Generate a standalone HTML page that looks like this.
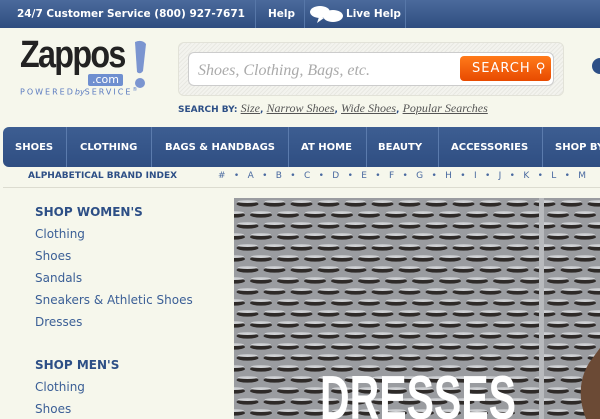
<!DOCTYPE html>
<html><head><meta charset="utf-8"><style>
*{margin:0;padding:0;box-sizing:border-box}
body{width:600px;height:419px;overflow:hidden;background:#f6f7ec;font-family:"DejaVu Sans","Liberation Sans",sans-serif;position:relative}
.top{position:absolute;left:0;top:0;width:600px;height:28px;background:linear-gradient(#4b6a9c,#2f4d80);color:#fff;font-weight:bold;font-size:10.5px}
.top span{position:absolute;top:8px}
.sep{position:absolute;top:0;width:1px;height:28px;background:#1f3866;border-right:1px solid #5777a8}
.logo{position:absolute;left:20px;top:36px}
.sbox{position:absolute;left:178px;top:42px;width:386px;height:54px;border:1px solid #e2e2d8;border-radius:6px;background:repeating-linear-gradient(135deg,#f3f3ee 0 2px,#e8e8e2 2px 3px)}
.sin{position:absolute;left:188px;top:52px;width:366px;height:34px;background:#fff;border:1px solid #ccc;border-radius:6px;font-family:"Liberation Serif",serif;font-style:italic;color:#aaa;font-size:16px;padding:9px 0 0 9px}
.sbtn{position:absolute;left:460px;top:56px;width:91px;height:25px;border-radius:4px;background:linear-gradient(#ff7a1a,#e84a00);color:#fff;font-size:13px;letter-spacing:1px;padding:5px 0 0 12px}
.sby{position:absolute;left:178px;top:101px;font-size:9px;color:#2d4f86;font-weight:bold;white-space:nowrap}
.sby i{font-family:"Liberation Serif",serif;font-weight:normal;color:#555;text-decoration:underline;font-size:12px}
.nav{position:absolute;left:3px;top:127px;width:600px;height:40px;background:linear-gradient(#3d5e92,#2f4e82);border-radius:6px 0 0 6px;color:#fff;font-weight:bold;font-size:10px;white-space:nowrap}
.nav span{position:absolute;top:15px}
.nav b{position:absolute;top:0;width:1px;height:40px;background:#5b7bad}
.idx{position:absolute;top:171px;font-size:9px;color:#2d4f86;white-space:nowrap}
.line{position:absolute;left:3px;top:187px;width:597px;height:1px;background:#dcdcd0}
.side{position:absolute;left:35px;color:#3b5f96;font-size:12px}
.h{font-weight:bold;font-size:12px;color:#2d4f86}
.img{position:absolute;left:234px;top:198px;width:366px;height:221px;overflow:hidden;background:#8d8f93}
</style></head><body>
<div class="top">
<span style="left:17px">24/7 Customer Service (800) 927-7671</span>
<div class="sep" style="left:255px"></div>
<span style="left:268px">Help</span>
<div class="sep" style="left:304px"></div>
<svg style="position:absolute;left:309px;top:5px" width="36" height="20"><ellipse cx="11" cy="7" rx="10" ry="6" fill="#fff"/><ellipse cx="24" cy="11" rx="10" ry="6" fill="#fff"/><path d="M10 12 L8 18 L15 13Z" fill="#fff"/></svg>
<span style="left:346px">Live Help</span>
<div class="sep" style="left:405px"></div>
</div>
<div class="logo">
<div style="font-family:'Liberation Sans',sans-serif;font-weight:bold;font-size:38px;color:#222;letter-spacing:-2px;line-height:38px;transform:scaleX(0.85);transform-origin:left">Zappos</div>
<div style="position:absolute;left:68px;top:38px;background:#6f8fd0;color:#fff;font-size:11px;padding:0 4px;border-radius:2px;line-height:12px">.com</div>
<svg style="position:absolute;left:110px;top:4px" width="20" height="50"><path d="M5 2 Q12 -1 16 4 L13 31 Q10 35 7 32 Z" fill="#7b95d0"/><circle cx="10" cy="43" r="5" fill="#7b95d0"/></svg>
<div style="position:absolute;left:0;top:51px;font-size:8px;color:#5b7bc0;letter-spacing:2px;white-space:nowrap">POWERED<i style="letter-spacing:0">by</i>SERVICE<sup style="font-size:5px">®</sup></div>
</div>
<div class="sbox"></div>
<div class="sin">Shoes, Clothing, Bags, etc.</div>
<div class="sbtn">SEARCH ⚲</div>
<div style="position:absolute;left:592px;top:58px;width:16px;height:16px;border-radius:8px;background:#2d4f86"></div>
<div class="sby">SEARCH BY: <i>Size</i>, <i>Narrow Shoes</i>, <i>Wide Shoes</i>, <i>Popular Searches</i></div>
<div class="nav">
<span style="left:12px">SHOES</span><b style="left:63px"></b>
<span style="left:77px">CLOTHING</span><b style="left:148px"></b>
<span style="left:162px">BAGS &amp; HANDBAGS</span><b style="left:285px"></b>
<span style="left:298px">AT HOME</span><b style="left:363px"></b>
<span style="left:375px">BEAUTY</span><b style="left:435px"></b>
<span style="left:448px">ACCESSORIES</span><b style="left:539px"></b>
<span style="left:552px">SHOP BY</span>
</div>
<div class="idx" style="left:28px;font-weight:bold">ALPHABETICAL BRAND INDEX</div>
<div class="idx" style="left:218px;color:#4a6aa0;letter-spacing:0">
<span style="word-spacing:5.5px">#&nbsp;•&nbsp;A&nbsp;•&nbsp;B&nbsp;•&nbsp;C&nbsp;•&nbsp;D&nbsp;•&nbsp;E&nbsp;•&nbsp;F&nbsp;•&nbsp;G&nbsp;•&nbsp;H&nbsp;•&nbsp;I&nbsp;•&nbsp;J&nbsp;•&nbsp;K&nbsp;•&nbsp;L&nbsp;•&nbsp;M</span></div>
<div class="line"></div>
<div class="side" style="top:205px"><div class="h">SHOP WOMEN'S</div></div>
<div class="side" style="top:227px">Clothing</div>
<div class="side" style="top:249px">Shoes</div>
<div class="side" style="top:271px">Sandals</div>
<div class="side" style="top:293px">Sneakers &amp; Athletic Shoes</div>
<div class="side" style="top:315px">Dresses</div>
<div class="side" style="top:358px"><div class="h">SHOP MEN'S</div></div>
<div class="side" style="top:380px">Clothing</div>
<div class="side" style="top:402px">Shoes</div>
<div class="img">
<svg width="366" height="221">
<defs><pattern id="p" width="27" height="22" patternUnits="userSpaceOnUse">
<rect width="27" height="22" fill="#9a9ca0"/>
<ellipse cx="13.5" cy="6" rx="11" ry="2.6" fill="#2e2a28"/><ellipse cx="13.5" cy="3.6" rx="10" ry="1.4" fill="#cfd1d4"/>
<ellipse cx="0" cy="17" rx="11" ry="2.6" fill="#2e2a28"/><ellipse cx="27" cy="17" rx="11" ry="2.6" fill="#2e2a28"/>
<ellipse cx="0" cy="14.6" rx="10" ry="1.4" fill="#cfd1d4"/><ellipse cx="27" cy="14.6" rx="10" ry="1.4" fill="#cfd1d4"/>
</pattern></defs>
<rect width="366" height="221" fill="url(#p)"/>
<rect x="305" y="0" width="5" height="221" fill="#b8babd"/>
<path d="M352 221 Q340 190 355 165 L366 150 L366 221Z" fill="#6b4a35"/>
<text x="86" y="221" font-family="Liberation Sans Narrow,Liberation Sans,sans-serif" font-weight="bold" font-size="62" fill="#fff" textLength="196" lengthAdjust="spacingAndGlyphs">DRESSES</text>
</svg>
</div>
</body></html>
